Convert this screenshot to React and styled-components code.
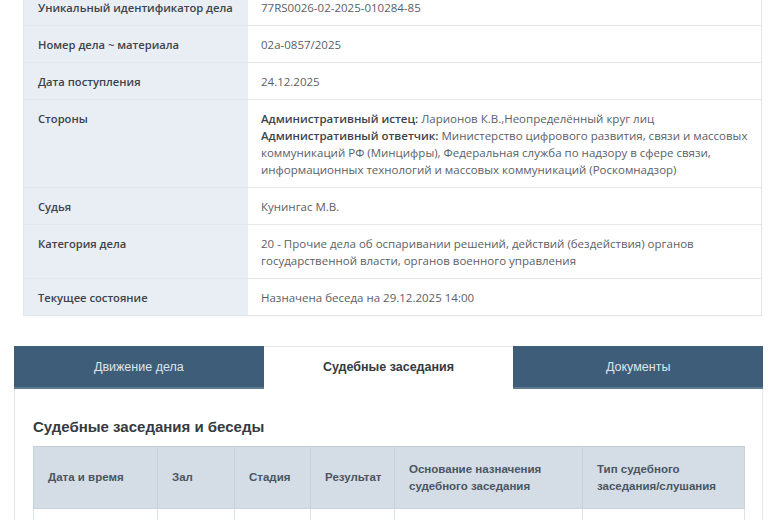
import React from 'react';
import styled, { createGlobalStyle } from 'styled-components';

const GlobalStyle = createGlobalStyle`
    html, body {
        margin: 0;
        padding: 0;
        background: #ffffff;
    }
    * {
        box-sizing: border-box;
    }
`;

const caseInfo = [
    { label: 'Уникальный идентификатор дела', value: '77RS0026-02-2025-010284-85' },
    { label: 'Номер дела ~ материала', value: '02a-0857/2025' },
    { label: 'Дата поступления', value: '24.12.2025' },
    {
        label: 'Стороны',
        value: (
            <>
                <b>Административный истец:</b> Ларионов К.В.,Неопределённый круг лиц
                <br />
                <b>Административный ответчик:</b> Министерство цифрового развития, связи и массовых
                коммуникаций РФ (Минцифры), Федеральная служба по надзору в сфере связи,
                информационных технологий и массовых коммуникаций (Роскомнадзор)
            </>
        ),
    },
    { label: 'Судья', value: 'Кунингас М.В.' },
    {
        label: 'Категория дела',
        value: '20 - Прочие дела об оспаривании решений, действий (бездействия) органов государственной власти, органов военного управления',
    },
    { label: 'Текущее состояние', value: 'Назначена беседа на 29.12.2025 14:00' },
];

const tabs = [
    { title: 'Движение дела', active: false },
    { title: 'Судебные заседания', active: true },
    { title: 'Документы', active: false },
];

const columns = [
    { title: 'Дата и время', width: 124 },
    { title: 'Зал', width: 77 },
    { title: 'Стадия', width: 76 },
    { title: 'Результат', width: 84 },
    { title: 'Основание назначения судебного заседания', width: 188 },
    { title: 'Тип судебного заседания/слушания', width: 162 },
];

function App() {
    return (
        <Page>
            <GlobalStyle />
            <InfoTable>
                {caseInfo.map((row) => (
                    <InfoRow key={row.label}>
                        <Label>{row.label}</Label>
                        <Value>{row.value}</Value>
                    </InfoRow>
                ))}
            </InfoTable>

            <TabsBlock>
                <TabBar>
                    {tabs.map((tab) => (
                        <Tab key={tab.title} active={tab.active}>
                            {tab.title}
                        </Tab>
                    ))}
                </TabBar>
                <Panel>
                    <Heading>Судебные заседания и беседы</Heading>
                    <Sessions>
                        <thead>
                            <tr>
                                {columns.map((col) => (
                                    <HeadCell key={col.title} style={{ width: col.width }}>
                                        {col.title}
                                    </HeadCell>
                                ))}
                            </tr>
                        </thead>
                        <tbody>
                            <tr>
                                {columns.map((col) => (
                                    <BodyCell key={col.title}>&nbsp;</BodyCell>
                                ))}
                            </tr>
                        </tbody>
                    </Sessions>
                </Panel>
            </TabsBlock>
        </Page>
    );
}

export default App;

const Page = styled.div`
    display: flex;
    flex-direction: column;
    margin-top: -11px;
    height: 531px;
    overflow: hidden;
`;

const InfoTable = styled.div`
    margin: 0 18px 0 23px;
    border: 1px solid #e3e6ea;
    border-top: none;
    box-shadow: 0 1px 3px rgba(0, 0, 0, 0.04);
    font-family: 'Open Sans', 'Noto Sans', sans-serif;
    font-size: 11.5px;
    line-height: 17px;
`;

const InfoRow = styled.div`
    display: grid;
    grid-template-columns: 224px 1fr;
    border-bottom: 1px solid #e4e7eb;
    &:last-child {
        border-bottom: none;
    }
`;

const Label = styled.div`
    background: #e9eef4;
    color: #3d434b;
    font-weight: 600;
    font-size: 11.2px;
    white-space: nowrap;
    padding: 10px 10px 9px 14px;
`;

const Value = styled.div`
    background: #ffffff;
    color: #5b6067;
    padding: 10px 13px 9px 13px;

    b {
        color: #3d434b;
        font-weight: 600;
    }
`;

const TabsBlock = styled.div`
    margin: 30px 17px 0 14px;
    font-family: 'Liberation Sans', Arial, sans-serif;
`;

const TabBar = styled.div`
    display: grid;
    grid-template-columns: repeat(3, 1fr);
    height: 43px;
`;

const Tab = styled.div`
    display: flex;
    align-items: center;
    justify-content: center;
    font-size: 12.5px;
    background: ${(p) => (p.active ? '#ffffff' : '#3e5d78')};
    color: ${(p) => (p.active ? '#333a41' : '#dde5ec')};
    font-weight: ${(p) => (p.active ? 700 : 400)};
    border-top: 1px solid ${(p) => (p.active ? '#e6e9ec' : '#3e5d78')};
    border-bottom: 2px solid ${(p) => (p.active ? '#ffffff' : '#5f7a92')};
`;

const Panel = styled.div`
    border: 1px solid #e3e6ea;
    border-top: none;
    padding: 28px 18px 40px 18px;
    background: #ffffff;
`;

const Heading = styled.h2`
    margin: 0 0 9px 0;
    font-size: 15px;
    line-height: 20px;
    font-weight: 700;
    color: #353b41;
`;

const Sessions = styled.table`
    width: 711px;
    border-collapse: collapse;
    table-layout: fixed;
`;

const HeadCell = styled.th`
    background: #d4dce5;
    color: #4a5560;
    font-size: 11.5px;
    line-height: 17px;
    font-weight: 700;
    text-align: left;
    vertical-align: middle;
    height: 62px;
    padding: 0 14px;
    border: 1px solid #c9d1da;
    border-top-color: #c3ccd6;
`;

const BodyCell = styled.td`
    height: 40px;
    border: 1px solid #dde2e8;
    background: #ffffff;
`;
